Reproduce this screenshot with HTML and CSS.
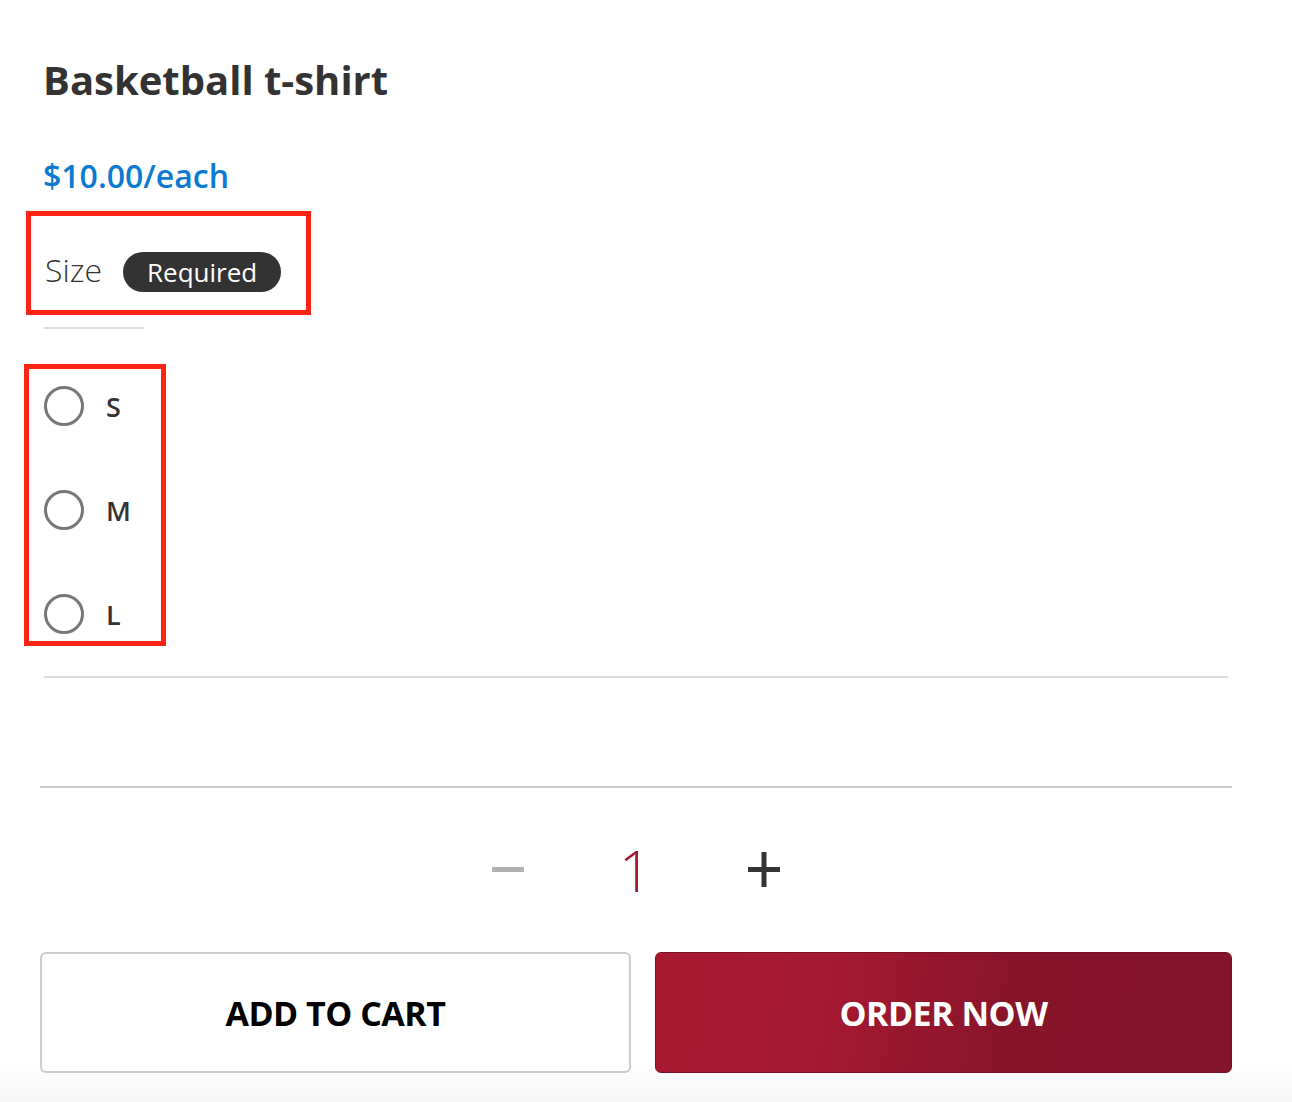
FILE: index.html
```html
<!DOCTYPE html>
<html lang="en">
<head>
<meta charset="utf-8">
<title>Basketball t-shirt</title>
<link rel="stylesheet" href="styles.css">
</head>
<body>
<main class="product">
  <h1 class="title">Basketball t-shirt</h1>
  <div class="price">$10.00/each</div>

  <div class="size-head mark">
    <span class="size-label">Size</span>
    <span class="badge">Required</span>
  </div>
  <div class="short-rule"></div>

  <div class="options mark">
    <label class="option"><span class="radio"></span><span class="opt-text">S</span></label>
    <label class="option"><span class="radio"></span><span class="opt-text">M</span></label>
    <label class="option"><span class="radio"></span><span class="opt-text">L</span></label>
  </div>

  <div class="rule rule-light"></div>
  <div class="rule rule-dark"></div>

  <div class="qty">
    <span class="qty-btn qty-minus" aria-label="decrease">
      <svg width="32" height="32" viewBox="0 0 32 32"><rect x="0" y="13" width="32" height="5" fill="#b0b0b0"/></svg>
    </span>
    <span class="qty-value">1</span>
    <span class="qty-btn qty-plus" aria-label="increase">
      <svg width="32" height="36" viewBox="0 0 32 36"><rect x="0" y="15" width="32" height="5" fill="#333"/><rect x="13.5" y="0" width="5" height="35" fill="#333"/></svg>
    </span>
  </div>

  <div class="actions">
    <button class="btn btn-cart">ADD TO CART</button>
    <button class="btn btn-order">ORDER NOW</button>
  </div>
</main>
</body>
</html>
```

FILE: styles.css
```css
html, body {
  margin: 0;
  padding: 0;
}
body {
  font-family: "Open Sans", "Noto Sans", sans-serif;
  color: #333;
  background: linear-gradient(to bottom, #ffffff 0, #ffffff 1062px, #f5f5f5 1102px);
  min-height: 1102px;
}
.product {
  width: 1192px;
  padding: 58px 0 0 40px;
  box-sizing: content-box;
}
.title {
  margin: 0 0 0 3px;
  font-size: 40px;
  line-height: 44px;
  font-weight: 700;
  color: #333;
}
.price {
  margin: 56px 0 0 3px;
  font-size: 32px;
  line-height: 36px;
  font-weight: 600;
  color: #0a7ad2;
}
.mark {
  border: 5px solid #fd2413;
  box-sizing: border-box;
}
.size-head {
  margin: 17px 0 0 -14px;
  width: 285px;
  height: 104px;
  display: flex;
  align-items: baseline;
  padding: 34px 0 0 14px;
}
.size-label {
  font-size: 32px;
  line-height: 40px;
  font-weight: 300;
  color: #333;
}
.badge {
  margin-left: 21px;
  height: 40px;
  padding: 0 24px;
  border-radius: 20px;
  background: #333;
  color: #fff;
  font-size: 26px;
  line-height: 40px;
  font-weight: 400;
}
.short-rule {
  margin: 12px 0 0 4px;
  width: 100px;
  height: 2px;
  background: #dddddd;
}
.options {
  margin: 35px 0 0 -16px;
  width: 142px;
  height: 282px;
  padding: 17px 0 0 15px;
  display: flex;
  flex-direction: column;
  gap: 64px;
}
.option {
  display: flex;
  align-items: center;
  height: 40px;
}
.radio {
  width: 40px;
  height: 40px;
  border: 3.5px solid #777;
  border-radius: 50%;
  box-sizing: border-box;
}
.opt-text {
  margin-left: 22px;
  font-size: 27px;
  font-weight: 600;
  color: #333;
}
.rule {
  height: 2px;
}
.rule-light {
  margin: 30px 4px 0 4px;
  background: #dddddd;
}
.rule-dark {
  margin: 108px 0 0 0;
  background: #cccccc;
}
.qty {
  margin-top: 52px;
  height: 60px;
  display: flex;
  align-items: center;
  justify-content: center;
}
.qty-btn {
  width: 32px;
  display: flex;
  justify-content: center;
}
.qty-minus {
  margin-right: 95px;
}
.qty-plus {
  margin-left: 97px;
}
.qty-value {
  width: 32px;
  text-align: center;
  font-size: 57px;
  line-height: 60px;
  font-weight: 300;
  color: #a6192e;
}
.actions {
  margin-top: 52px;
  display: flex;
  gap: 24px;
}
.btn {
  flex: 1 1 auto;
  height: 121px;
  border-radius: 6px;
  font-family: "Open Sans", "Noto Sans", sans-serif;
  font-size: 34px;
  font-weight: 700;
  letter-spacing: -0.5px;
  cursor: pointer;
}
.btn-cart {
  background: #fff;
  border: 2px solid #cccccc;
  color: #000;
}
.btn-order {
  background: linear-gradient(100deg, #a8182f 0%, #a5192f 30%, #871429 62%, #83142a 100%);
  border: 1px solid #7a1025;
  color: #fff;
}
```
